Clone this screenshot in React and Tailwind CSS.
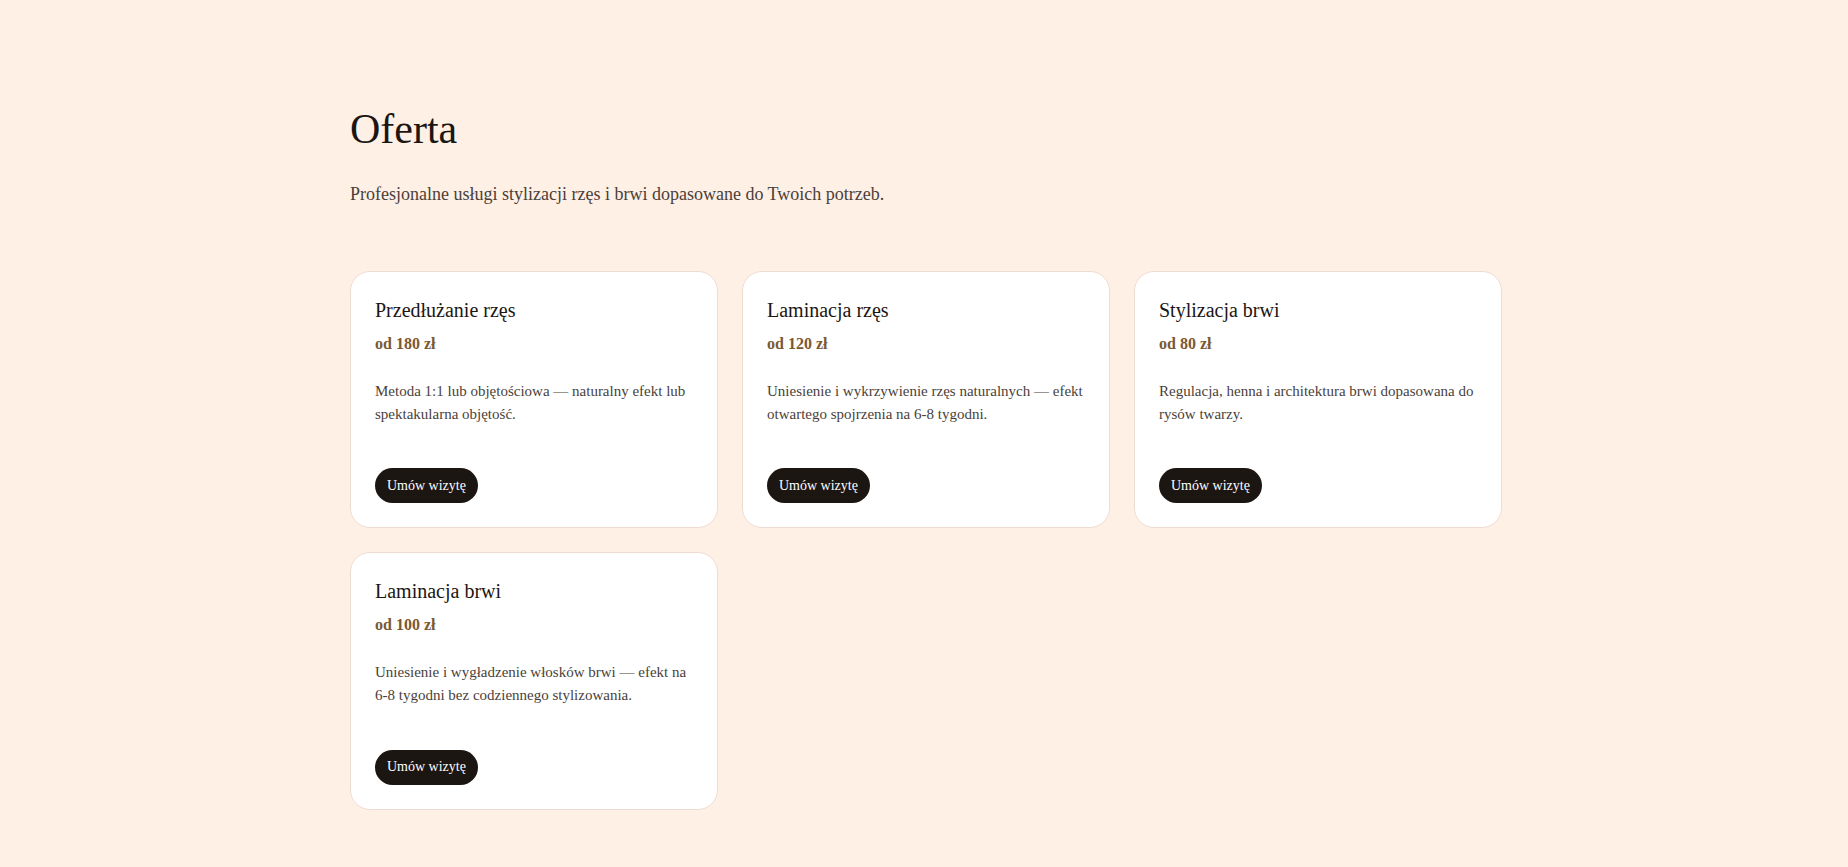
const SERVICES = [
  {
    name: 'Przedłużanie rzęs',
    price: 'od 180 zł',
    desc: 'Metoda 1:1 lub objętościowa — naturalny efekt lub spektakularna objętość.',
  },
  {
    name: 'Laminacja rzęs',
    price: 'od 120 zł',
    desc: 'Uniesienie i wykrzywienie rzęs naturalnych — efekt otwartego spojrzenia na 6-8 tygodni.',
  },
  {
    name: 'Stylizacja brwi',
    price: 'od 80 zł',
    desc: 'Regulacja, henna i architektura brwi dopasowana do rysów twarzy.',
  },
  {
    name: 'Laminacja brwi',
    price: 'od 100 zł',
    desc: 'Uniesienie i wygładzenie włosków brwi — efekt na 6-8 tygodni bez codziennego stylizowania.',
  },
]

function ServiceCard({ name, price, desc }) {
  return (
    <div className="bg-white rounded-[20px] border border-[#eedcd3] p-6 flex flex-col">
      <h3 className="text-xl leading-7 text-[#1c1613]">{name}</h3>
      <p className="mt-2 text-base leading-6 font-bold text-[#7b5931]">{price}</p>
      <p className="mt-6 text-[15px] leading-[1.55] text-[#4a3f3a]">{desc}</p>
      <div className="mt-[42px]">
        <button className="h-[35px] px-3 rounded-full bg-[#1c1613] text-white text-sm">
          Umów wizytę
        </button>
      </div>
    </div>
  )
}

export default function App() {
  return (
    <div className="min-h-screen bg-[#fff0e6] font-['Liberation_Serif','Times_New_Roman',serif]">
      <section className="max-w-[1156px] mx-auto pl-1 pt-[103px] pb-24">
        <h2 className="text-[42px] leading-tight text-[#1c1613]">Oferta</h2>
        <p className="mt-6 text-lg leading-7 text-[#4a3f3a]">
          Profesjonalne usługi stylizacji rzęs i brwi dopasowane do Twoich potrzeb.
        </p>

        <div className="mt-[63px] grid grid-cols-3 gap-6">
          {SERVICES.map(s => (
            <ServiceCard key={s.name} {...s} />
          ))}
        </div>
      </section>
    </div>
  )
}
